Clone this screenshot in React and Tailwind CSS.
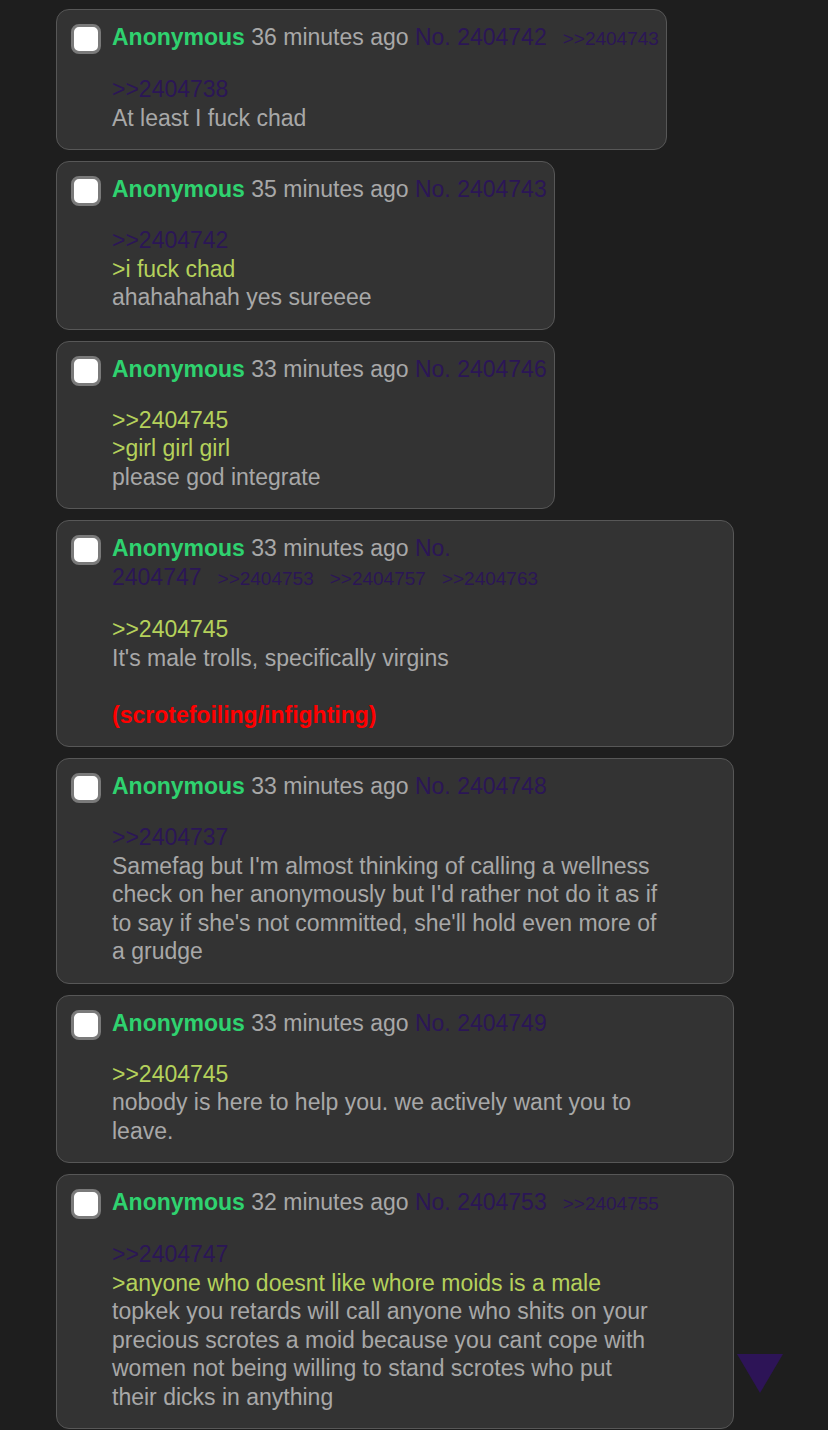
const posts = [
  {
    time: '36 minutes ago',
    no: '2404742',
    backlinks: ['2404743'],
    body: [
      { t: 'link', v: '>>2404738' },
      { t: 'text', v: 'At least I fuck chad' },
    ],
  },
  {
    time: '35 minutes ago',
    no: '2404743',
    backlinks: [],
    body: [
      { t: 'link', v: '>>2404742' },
      { t: 'quote', v: '>i fuck chad' },
      { t: 'text', v: 'ahahahahah yes sureeee' },
    ],
  },
  {
    time: '33 minutes ago',
    no: '2404746',
    backlinks: [],
    body: [
      { t: 'quote', v: '>>2404745' },
      { t: 'quote', v: '>girl girl girl' },
      { t: 'text', v: 'please god integrate' },
    ],
  },
  {
    time: '33 minutes ago',
    no: '2404747',
    backlinks: ['2404753', '2404757', '2404763'],
    body: [
      { t: 'quote', v: '>>2404745' },
      { t: 'text', v: "It's male trolls, specifically virgins" },
      { t: 'blank' },
      { t: 'red', v: '(scrotefoiling/infighting)' },
    ],
  },
  {
    time: '33 minutes ago',
    no: '2404748',
    backlinks: [],
    body: [
      { t: 'link', v: '>>2404737' },
      {
        t: 'text',
        v: "Samefag but I'm almost thinking of calling a wellness check on her anonymously but I'd rather not do it as if to say if she's not committed, she'll hold even more of a grudge",
      },
    ],
  },
  {
    time: '33 minutes ago',
    no: '2404749',
    backlinks: [],
    body: [
      { t: 'quote', v: '>>2404745' },
      { t: 'text', v: 'nobody is here to help you. we actively want you to leave.' },
    ],
  },
  {
    time: '32 minutes ago',
    no: '2404753',
    backlinks: ['2404755'],
    body: [
      { t: 'link', v: '>>2404747' },
      { t: 'quote', v: '>anyone who doesnt like whore moids is a male' },
      {
        t: 'text',
        v: 'topkek you retards will call anyone who shits on your precious scrotes a moid because you cant cope with women not being willing to stand scrotes who put their dicks in anything',
      },
    ],
  },
];

const BodyLine = ({ line }) => {
  if (line.t === 'blank') return <div className="h-[28.5px]" />;
  if (line.t === 'link') return <div className="text-[#2b1656]">{line.v}</div>;
  if (line.t === 'quote') return <div className="text-[#b5d15b]">{line.v}</div>;
  if (line.t === 'red') return <div className="font-bold text-[#ff0000]">{line.v}</div>;
  return <div className="text-[#a8a8a8]">{line.v}</div>;
};

const Post = ({ post }) => (
  <div className="w-fit max-w-[678px] rounded-[13px] border border-[#575757] bg-[#333333] pt-[13px] pb-[17px] pl-[14px] pr-[7px]">
    <div className="flex">
      {/* checkbox */}
      <div className="mt-[1px] mr-[11px] h-[30px] w-[30px] shrink-0 rounded-[8px] border-[3px] border-[#7a7a7a] bg-white" />
      <div className="min-w-0 flex-1">
        <div className="leading-[29px]">
          <span className="font-bold text-[#2fd26f]">Anonymous</span>{' '}
          <span className="text-[#a8a8a8]">{post.time}</span>{' '}
          <span className="text-[#2b1656]">No.</span>{' '}
          <span className="inline-block text-[#2b1656]">
            {post.no}
            {post.backlinks.map(b => (
              <span key={b} className="ml-4 text-[19px]">
                {'>>' + b}
              </span>
            ))}
          </span>
        </div>
        <div className="mt-[22px] mr-[66px] leading-[28.5px]">
          {post.body.map((line, i) => (
            <BodyLine key={i} line={line} />
          ))}
        </div>
      </div>
    </div>
  </div>
);

export default function App() {
  return (
    <div className="min-h-[1430px] overflow-hidden bg-[#1e1e1e] font-['Liberation_Sans',Arial,sans-serif] text-[23px]">
      <div className="flex flex-col gap-[11px] pt-[9px] pl-[56px]">
        {posts.map(p => (
          <Post key={p.no} post={p} />
        ))}
      </div>

      {/* scroll down button */}
      <div className="fixed left-[737px] top-[1354px] h-0 w-0 border-x-[23px] border-t-[39px] border-x-transparent border-t-[#2d1457]" />
    </div>
  );
}
